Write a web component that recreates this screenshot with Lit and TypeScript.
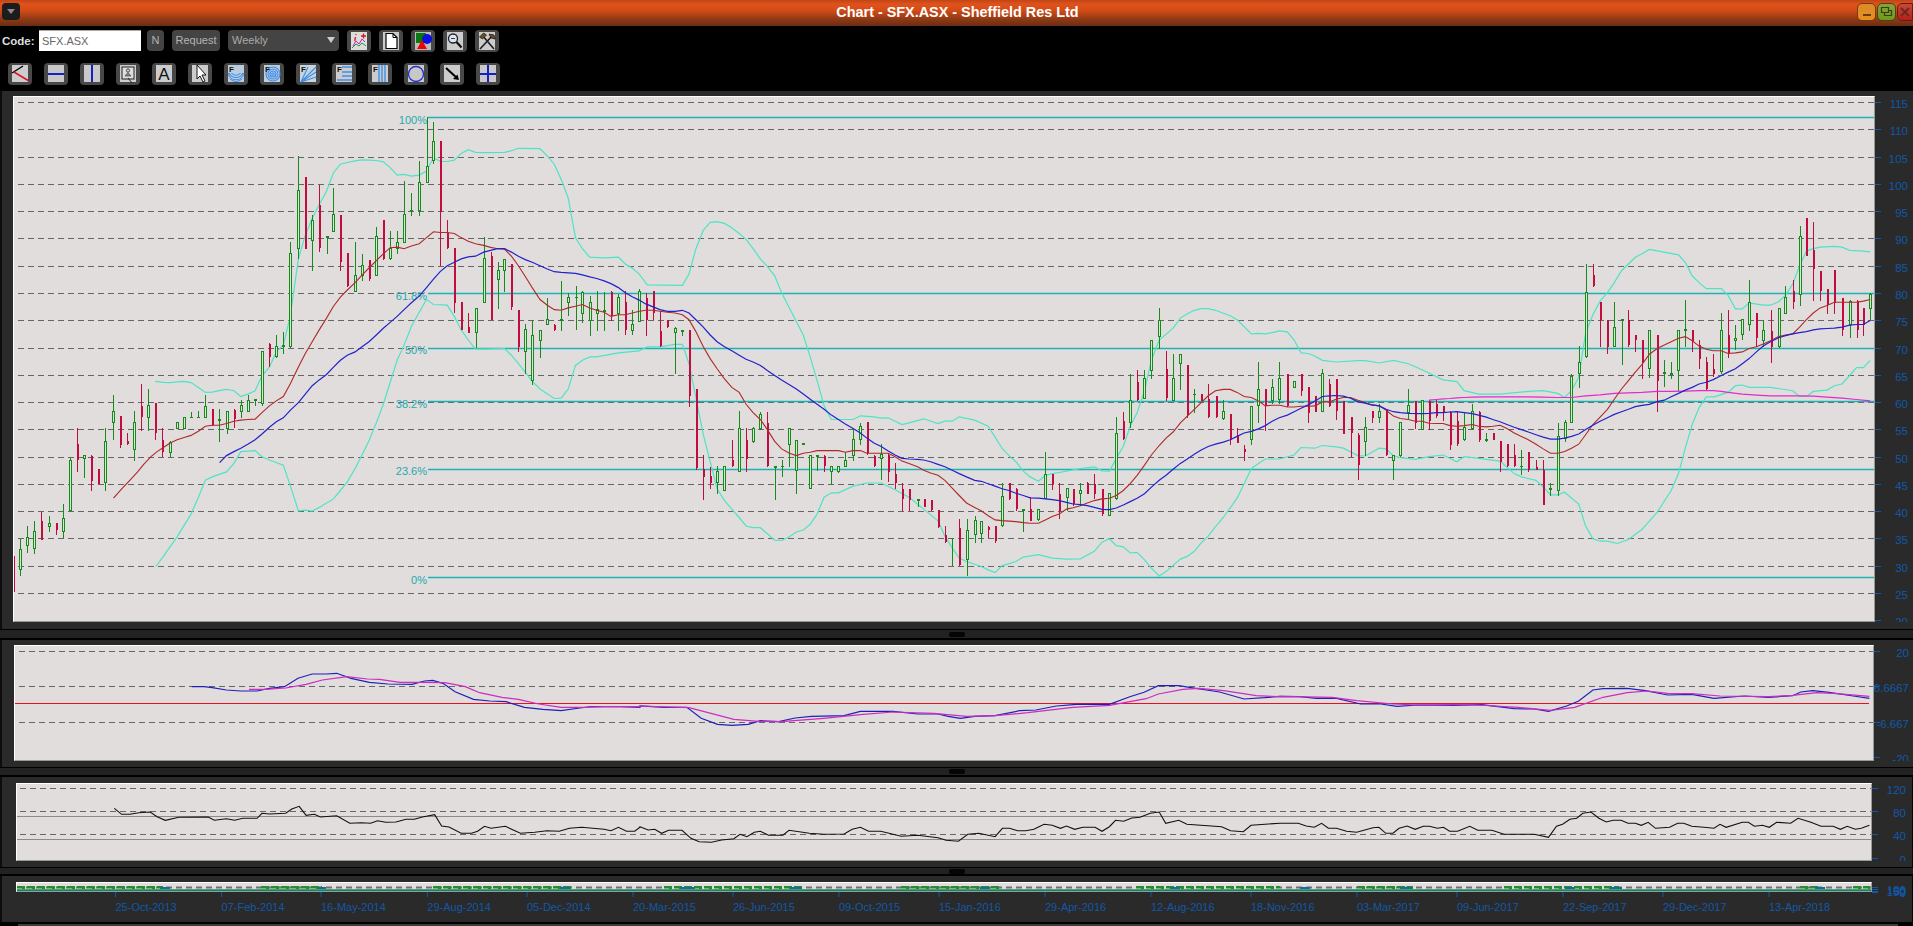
import { LitElement, html, css, svg } from "lit";
import { customElement } from "lit/decorators.js";

const SX3 = 2.45, SX5 = 2.477, SY = 2.958;
const xA = (z: number) => z / SX3;
const xB = (z: number) => 640 + z / SX3;
const xC = (z: number) => 1280 + z / SX5;
const yM = (z: number) => 100 + z / SY;
const yL = (z: number) => 620 + z / 3;

const C3 = `r32,1350,1455,1350,1455 g50,1298,1408,1328,1388 g67,1260,1340,1295,1318 g84,1245,1342,1276,1326 r101,1220,1300,1245,1300 g121,1230,1278,1253,1262 r138,1250,1287,1252,1272 g155,1195,1296,1238,1276 g172,1060,1215,1065,1213 r189,970,1100,1018,1065 g206,1050,1118,1052,1060 r223,1050,1157,1052,1128 r240,1092,1135,1092,1135 g258,970,1157,1010,1130 g278,872,1005,922,955 r295,935,1030,935,1020 r312,985,1020,1010,1018 g329,920,1068,955,1035 r346,840,978,905,938 g363,855,978,905,940 r380,897,1005,897,985 r397,970,1055,1005,1040 g417,1010,1055,1012,1042 g434,955,972,955,972 g451,938,972,940,972 g468,922,940,938,940 g486,920,940,938,940 g503,873,940,907,940 r520,915,965,915,960 g537,915,1012,945,947 g555,920,988,922,972 r573,915,970,918,945 g590,888,940,905,922 g607,872,922,888,922 g625,885,905,887,888 g642,745,905,745,898 r660,720,790,722,760 g677,695,762,730,760 g694,685,752,725,730 g711,420,732,455,730 g731,165,470,268,438 r748,228,440,228,440 g765,340,505,355,415 r782,250,450,310,438 g800,405,455,405,407 g817,260,390,340,390 r834,340,505,340,478 r851,452,552,452,550 g870,420,568,518,565 g887,455,535,488,518 r904,472,535,472,530 g922,375,520,405,520 r939,355,472,355,470 g956,388,472,438,470 g973,388,455,422,438 g990,238,422,340,422 g1008,275,342,326,328 g1027,180,342,245,328 g1045,50,245,196,245 g1062,65,190,122,180 r1079,120,490,120,330 r1096,355,440,392,438 r1113,438,630,438,600 r1130,598,680,598,680 r1147,630,688,672,688 g1165,615,732,617,688 g1185,405,600,470,600 r1202,450,652,460,652 g1219,480,618,505,532 g1236,470,568,472,505 r1253,485,622,485,612 r1270,622,745,622,730 g1287,662,810,680,745 g1304,652,842,695,830 g1323,680,762,682,712 g1341,585,665,650,665 r1358,662,682,665,680 g1375,535,682,650,652 g1392,570,640,585,600 g1410,550,680,583,585 g1427,565,660,568,632 g1445,580,698,600,652 g1462,565,682,620,632 g1480,568,682,622,624 r1497,565,655,568,638 g1515,575,682,583,632 r1532,565,695,598,680 g1549,622,695,665,682 g1566,560,655,565,655`;
const C4 = `r14,570,698,585,650 r32,565,652,565,630 r49,625,730,682,728 r67,650,675,650,672 g86,672,810,675,687 g104,682,698,682,684 r120,680,908,680,875 r137,855,1095,855,1090 r155,1050,1182,1090,1115 r172,1085,1150,1112,1132 g189,1082,1165,1098,1132 g207,1082,1157,1085,1155 r225,1005,1085,1065,1083 g243,920,1100,972,1098 r260,970,1100,1005,1062 g277,968,1015,972,1010 g295,922,975,930,973 r312,922,1085,955,1082 g330,1085,1182,1084,1086 g347,1065,1115,1083,1085 g366,970,1085,972,1018 g383,1005,1165,1007,1097 g400,1017,1019,1017,1019 g417,1050,1150,1052,1148 g434,1052,1098,1052,1054 r451,1050,1100,1052,1082 g469,1082,1140,1085,1100 g486,1082,1102,1085,1100 g503,1040,1085,1065,1085 g522,975,1068,1005,1052 g540,955,1020,965,1005 r556,952,1050,952,1045 r573,1050,1085,1052,1082 g591,1018,1125,1048,1060 r608,1048,1130,1050,1100 r625,1075,1150,1105,1132 r642,1132,1215,1150,1180 r659,1150,1215,1150,1182 g680,1180,1205,1181,1183 r695,1180,1205,1180,1205 r712,1182,1215,1182,1212 r730,1212,1265,1212,1262 r747,1260,1310,1288,1308 g765,1295,1378,1296,1298 r782,1240,1378,1265,1375 g800,1240,1408,1272,1360 g820,1230,1310,1245,1285 g836,1245,1310,1246,1282 r853,1260,1295,1262,1272 r870,1260,1310,1260,1305 g887,1132,1262,1172,1260 r904,1132,1182,1132,1180 r921,1148,1215,1150,1210 g939,1210,1278,1212,1214 r956,1175,1245,1210,1245 g976,1210,1245,1212,1240 g993,1040,1180,1108,1180 r1010,1105,1152,1105,1135 r1027,1132,1240,1165,1215 g1045,1148,1215,1150,1175 r1061,1150,1200,1150,1195 g1079,1132,1200,1155,1165 r1096,1130,1165,1132,1165 r1113,1105,1180,1135,1165 r1132,1150,1230,1150,1225 g1150,1165,1230,1165,1228 g1167,938,1182,985,1180 r1184,922,1005,950,1002 g1201,810,970,890,955 r1218,798,890,835,887 g1236,798,885,825,883 g1253,712,825,712,800 g1272,615,735,652,698 r1289,742,890,795,880 g1306,750,890,825,888 g1324,750,858,752,778 r1341,785,940,785,932 g1358,855,925,870,872 r1375,870,890,870,890 r1392,840,940,885,938 r1410,875,940,875,937 g1429,888,945,920,942 r1446,930,1020,930,1005 r1463,970,1015,995,1015 r1480,1020,1068,1033,1040 g1498,905,1020,907,1005 g1515,775,955,857,905 r1532,855,978,855,905 g1549,825,898,850,890 g1566,775,900,825,885`;
const C5 = `r18,810,908,810,905 g35,832,850,832,850 r52,810,875,810,860 r70,850,955,850,925 r87,875,922,875,922 g105,795,922,810,920 r122,825,908,840,905 r139,825,945,825,920 r157,890,988,890,988 r175,938,1055,938,985 r193,985,1125,990,1080 g211,938,1052,970,1010 r227,920,955,920,940 g246,898,955,920,940 r263,918,1052,918,1050 g281,1050,1125,1052,1065 g298,953,1055,955,1052 g318,855,942,905,925 r335,890,972,890,955 g352,888,975,890,973 r369,888,975,890,950 r387,885,940,900,935 r404,905,950,905,925 r421,920,1035,922,1020 r438,922,1022,950,1018 g456,925,1008,970,1005 g476,898,975,922,972 r492,920,1012,922,1005 g511,985,1012,1004,1006 r527,985,1005,985,1005 r545,1010,1100,1010,1070 r562,1018,1085,1018,1082 r580,1018,1085,1050,1082 g598,1035,1110,1083,1085 r615,1040,1100,1040,1095 r634,1065,1095,1085,1093 r652,1065,1198,1095,1198 g670,1133,1172,1150,1152 g688,955,1170,995,1155 g705,945,1012,955,1002 g722,810,955,818,953 g740,728,852,775,810 g757,485,762,568,760 r775,485,552,518,550 r793,598,730,598,650 r811,650,752,650,730 g828,598,730,672,730 g846,650,785,650,652 r863,620,730,650,725 r880,695,745,695,710 r897,710,825,710,775 g915,682,822,682,795 r934,695,922,695,830 g952,770,850,807,809 g969,775,825,809,811 g987,680,860,682,800 g1004,592,730,679,681 r1021,680,745,680,715 r1038,710,795,725,765 r1056,760,858,775,855 r1073,750,820,795,810 g1093,630,810,682,802 r1110,620,762,695,748 g1128,665,740,705,712 g1145,650,710,650,695 g1162,532,682,600,665 r1180,630,730,630,705 g1197,650,730,682,712 r1215,622,778,682,730 g1235,615,732,617,730 g1252,550,632,585,630 r1270,532,618,565,598 g1287,372,608,405,575 r1302,350,462,350,462 r1321,362,595,445,500 r1338,505,595,505,565 r1355,558,632,558,605 r1373,503,632,503,600 r1392,585,698,585,680 g1411,592,705,595,665 r1428,592,705,595,680 r1445,615,698,615,665 g1462,572,650,575,618`;

interface Candle { x: number; hi: number; lo: number; top: number; bot: number; up: boolean }
const parseC = (s: string, fx: (n: number) => number): Candle[] =>
  s.split(" ").map((t) => {
    const [x, hi, lo, top, bot] = t.slice(1).split(",").map(Number);
    return { x: Math.round(fx(x)) + 0.5, hi: yM(hi), lo: yM(lo), top: yM(top), bot: yM(bot), up: t[0] === "g" };
  });
const CANDLES = [...parseC(C3, xA), ...parseC(C4, xB), ...parseC(C5, xC)];

const seg = (s: string, fx: (n: number) => number, fy: (n: number) => number) =>
  s.trim().split(/\s+/).map((p) => {
    const [a, b] = p.split(",").map(Number);
    return `${fx(a).toFixed(1)},${fy(b).toFixed(1)}`;
  }).join(" ");

const RED_MA = [
  seg(`278,1178 300,1148 318,1125 337,1100 352,1078 370,1055 385,1040 400,1028 417,1015 434,1005 451,998 468,992 486,980 503,965 520,962 537,962 555,957 573,950 590,947 607,945 625,944 642,925 660,905 677,890 694,877 711,840 731,790 748,750 765,715 782,680 800,645 817,610 834,583 851,562 870,540 887,518 904,497 922,475 939,455 956,437 973,435 990,440 1008,432 1027,425 1045,407 1062,390 1079,392 1096,392 1113,395 1130,407 1147,418 1165,425 1185,430 1202,436 1219,440 1236,441 1253,462 1270,490 1287,522 1304,555 1323,590 1341,607 1358,620 1375,622 1392,615 1410,610 1427,605 1445,615 1462,622 1480,628 1497,640 1515,635 1532,635 1549,630 1566,625`, xA, yM),
  seg(`0,625 14,622 32,622 49,625 67,628 86,630 104,635 120,650 137,685 155,730 172,765 189,795 207,825 225,850 243,865 260,900 277,925 295,945 312,975 330,1010 347,1032 366,1045 383,1052 400,1045 417,1042 434,1037 451,1037 486,1037 503,1042 522,1037 540,1037 556,1045 573,1045 608,1045 625,1055 642,1068 659,1075 680,1085 695,1095 712,1103 730,1110 747,1125 765,1148 782,1170 800,1192 820,1205 836,1215 853,1230 870,1242 887,1244 921,1247 939,1250 956,1252 976,1252 993,1242 1010,1232 1027,1225 1045,1210 1061,1206 1079,1200 1096,1192 1113,1185 1132,1180 1150,1178 1167,1170 1184,1155 1201,1135 1218,1110 1236,1080 1253,1050 1272,1022 1289,1000 1306,982 1324,955 1341,935 1358,915 1375,895 1392,875 1410,860 1429,856 1446,856 1463,865 1480,877 1498,880 1515,890 1532,905 1549,903 1566,903`, xB, yM),
  seg(`0,903 18,908 35,908 52,906 70,906 87,905 105,893 122,893 139,885 157,880 175,880 193,888 211,895 227,902 246,905 263,918 281,935 298,942 318,945 335,950 352,950 369,956 387,957 404,957 421,963 438,965 456,963 476,960 492,965 511,967 527,965 545,962 562,972 580,985 598,995 615,1005 634,1018 652,1032 670,1045 688,1045 705,1040 722,1030 740,1018 757,990 775,960 793,938 811,915 828,885 846,855 863,830 880,805 897,782 915,752 934,735 952,725 969,715 987,705 1004,700 1021,712 1038,728 1056,737 1073,742 1093,742 1110,750 1128,748 1145,745 1162,735 1180,730 1197,722 1215,712 1235,700 1252,695 1270,692 1287,672 1304,650 1321,630 1338,615 1355,608 1373,598 1392,598 1411,598 1428,598 1445,595 1462,590`, xC, yM),
].join(" ");

const BLUE_MA = [
  seg(`538,1073 555,1052 573,1040 590,1030 607,1018 625,1005 642,988 660,968 677,952 694,940 711,918 731,895 748,870 765,845 782,828 800,812 817,790 834,770 851,755 870,745 887,730 904,715 922,695 939,675 956,658 973,640 990,620 1008,600 1027,580 1045,555 1062,530 1079,507 1096,490 1113,480 1130,470 1147,464 1165,462 1185,450 1202,445 1219,440 1236,440 1253,450 1270,462 1287,472 1304,480 1323,490 1341,500 1358,508 1375,510 1392,511 1410,513 1427,517 1445,523 1462,528 1480,535 1497,543 1515,555 1532,570 1549,582 1566,592`, xA, yM),
  seg(`14,603 32,612 49,620 67,625 86,625 104,622 120,630 137,650 155,672 172,695 189,715 207,730 225,742 243,755 260,767 277,775 295,785 312,800 330,815 347,828 366,842 383,855 400,870 417,885 434,900 451,915 469,932 486,945 503,958 522,972 540,985 556,1000 573,1015 591,1025 608,1038 625,1050 642,1060 659,1062 680,1063 695,1065 712,1070 730,1078 747,1085 765,1095 782,1105 800,1115 820,1125 836,1128 853,1135 870,1142 887,1150 904,1155 921,1163 939,1170 956,1177 976,1178 993,1180 1010,1182 1027,1185 1045,1190 1061,1195 1079,1197 1096,1200 1113,1205 1132,1211 1150,1212 1167,1207 1184,1198 1201,1188 1218,1178 1236,1165 1253,1145 1272,1125 1289,1110 1306,1092 1324,1075 1341,1062 1358,1048 1375,1035 1392,1025 1410,1018 1429,1012 1446,1005 1463,995 1480,985 1498,980 1515,973 1532,963 1549,950 1566,940`, xB, yM),
  seg(`18,932 35,922 52,912 70,902 87,890 105,877 122,875 139,874 157,876 175,882 193,893 211,897 227,902 246,905 263,915 281,922 298,925 318,927 352,928 369,927 387,925 404,925 421,923 438,922 456,925 476,928 492,932 511,938 527,945 545,952 562,960 580,968 598,975 615,982 634,990 652,997 670,1003 688,1003 705,1000 722,995 740,988 757,975 775,962 793,950 811,940 828,930 846,922 863,915 880,907 897,903 915,900 934,892 952,888 969,878 987,868 1004,858 1021,850 1038,840 1056,835 1073,827 1093,815 1110,805 1128,795 1145,780 1162,765 1180,745 1197,728 1215,715 1235,703 1252,697 1270,692 1287,688 1304,685 1321,680 1338,677 1355,676 1373,675 1392,672 1411,666 1428,664 1445,664 1462,652`, xC, yM),
].join(" ");

const MAGENTA_MA = seg(`369,888 387,886 404,884 421,883 438,881 456,880 476,879 511,878 545,878 580,878 615,878 652,879 688,880 722,880 757,875 793,872 828,868 863,866 897,865 934,862 969,862 1004,861 1038,860 1073,860 1093,862 1110,865 1145,870 1180,873 1215,875 1252,875 1287,875 1321,876 1355,879 1392,882 1428,886 1462,890`, xC, yM);

const BB_UP = [
  seg(`380,832 400,835 417,836 434,834 451,832 468,836 486,850 503,865 520,864 537,860 555,856 573,860 590,877 607,870 625,860 642,815 660,790 677,745 694,725 711,640 731,470 748,400 765,350 782,310 800,270 817,215 834,190 851,185 870,180 887,177 904,178 922,179 939,183 956,200 973,222 990,220 1008,225 1027,222 1045,210 1062,170 1079,182 1096,182 1113,178 1130,158 1147,147 1165,155 1185,156 1236,155 1253,150 1270,143 1323,144 1341,165 1358,190 1375,235 1392,290 1410,408 1427,440 1445,465 1480,467 1515,465 1532,485 1549,497 1566,515`, xA, yM),
  seg(`18,547 104,548 120,515 137,440 155,385 172,362 189,360 207,365 225,378 243,395 260,412 277,440 295,470 312,492 330,520 347,570 366,615 383,655 400,695 417,760 434,830 451,905 469,945 522,945 540,934 573,937 591,941 608,940 642,960 659,955 695,943 730,957 747,950 765,950 782,937 820,947 853,965 887,1030 904,1052 921,1070 939,1098 956,1115 976,1128 993,1110 1010,1105 1027,1102 1045,1098 1079,1090 1113,1085 1132,1097 1150,1098 1167,1060 1184,1025 1201,965 1218,925 1236,860 1253,770 1272,710 1306,675 1324,645 1341,632 1358,622 1375,617 1392,617 1410,622 1446,638 1463,650 1498,692 1515,690 1532,692 1549,688 1566,683`, xB, yM),
  seg(`18,686 35,710 52,748 70,750 87,758 105,770 139,775 193,771 211,771 246,778 281,770 318,780 352,798 404,828 438,833 456,860 492,870 545,870 615,862 652,860 688,868 705,880 722,860 740,820 757,690 775,635 793,595 811,570 828,540 846,505 863,485 880,465 897,455 915,442 987,458 1004,480 1021,520 1038,540 1056,558 1093,558 1110,578 1128,618 1145,618 1162,600 1197,607 1215,607 1235,597 1252,577 1270,545 1287,490 1304,447 1321,440 1338,435 1373,433 1392,435 1411,445 1445,447 1462,449`, xC, yM),
].join(" ");

const BB_LO = [
  seg(`382,1380 400,1350 434,1292 468,1225 486,1175 503,1125 520,1115 555,1100 573,1075 590,1040 625,1037 642,1055 660,1065 694,1080 711,1140 731,1215 748,1213 765,1216 782,1205 817,1180 834,1155 851,1130 870,1090 887,1050 904,1008 922,955 939,900 956,835 973,770 990,725 1008,670 1027,628 1045,590 1062,605 1096,607 1113,640 1130,680 1147,710 1165,737 1185,737 1236,735 1253,755 1270,780 1287,805 1304,832 1323,855 1358,883 1375,882 1392,855 1410,785 1427,770 1445,760 1462,760 1515,748 1566,742`, xA, yM),
  seg(`18,730 50,730 85,723 104,723 120,780 137,880 155,990 172,1070 189,1150 207,1185 225,1210 243,1235 260,1260 277,1265 295,1265 330,1302 347,1303 366,1292 383,1278 400,1272 417,1255 434,1225 451,1175 469,1162 486,1162 522,1142 556,1133 591,1133 625,1153 659,1175 695,1210 730,1245 747,1290 765,1325 782,1355 800,1365 836,1380 853,1390 870,1398 887,1378 921,1365 939,1352 976,1345 993,1350 1010,1355 1045,1358 1079,1357 1113,1335 1132,1308 1150,1298 1167,1318 1184,1322 1201,1340 1218,1338 1236,1360 1253,1385 1272,1408 1289,1395 1324,1358 1341,1350 1358,1335 1375,1310 1392,1290 1410,1262 1429,1235 1463,1178 1480,1135 1498,1090 1515,1075 1532,1062 1566,1062`, xB, yM),
  seg(`35,1050 52,1028 87,1030 105,1022 139,1026 157,1030 193,1052 211,1053 246,1030 263,1032 281,1053 298,1058 335,1063 369,1055 404,1050 438,1070 456,1055 492,1060 545,1068 580,1105 598,1115 634,1125 652,1145 670,1168 688,1168 705,1160 740,1195 757,1260 775,1298 793,1305 811,1305 835,1312 863,1300 897,1270 934,1220 969,1155 987,1105 1004,1030 1021,960 1038,910 1056,878 1075,878 1110,865 1128,845 1145,843 1162,850 1215,850 1270,860 1287,877 1304,877 1321,862 1355,858 1373,845 1392,840 1411,815 1428,792 1445,792 1462,770`, xC, yM),
].join(" ");

const MACD_BLUE = [
  seg(`470,200 500,200 520,203 555,210 590,213 630,213 660,205 697,200 730,175 765,162 800,162 825,160 860,175 905,187 950,192 1010,193 1040,183 1060,181 1085,190 1115,215 1160,238 1200,243 1240,245 1285,262 1330,268 1375,272 1420,264 1450,260 1520,260 1568,262`, xA, yL),
  seg(`0,258 60,262 115,262 150,295 190,313 225,316 265,313 295,302 340,305 380,294 420,289 500,287 540,274 620,274 680,282 730,282 755,289 785,295 820,289 870,287 930,272 970,270 1020,258 1070,253 1150,253 1200,230 1235,217 1270,197 1320,197 1350,203 1420,216 1480,237 1530,233 1568,229`, xB, yL),
  seg(`0,229 50,230 90,235 140,235 200,252 250,252 290,259 340,255 430,256 500,254 580,266 630,267 665,274 710,258 740,243 775,210 800,206 860,205 905,212 960,225 1020,223 1075,235 1150,228 1210,232 1270,227 1290,216 1320,212 1360,217 1420,228 1460,235`, xC, yL),
].join(" ");
const MACD_MAG = [
  seg(`610,208 650,208 700,204 750,193 790,180 850,170 900,177 930,178 980,187 1030,187 1090,188 1140,200 1175,218 1230,232 1270,238 1320,252 1375,262 1430,262 1480,260 1568,260`, xA, yL),
  seg(`0,258 120,263 230,298 290,304 345,305 450,295 540,284 620,276 720,280 800,289 870,287 950,278 1060,262 1150,256 1240,236 1270,222 1330,208 1370,205 1430,212 1510,227 1568,230`, xB, yL),
  seg(`0,229 130,232 190,242 280,252 340,255 430,254 490,255 590,262 670,271 730,262 800,232 860,218 910,213 960,220 1020,221 1090,228 1210,230 1270,226 1330,218 1380,221 1460,229`, xC, yL),
].join(" ");
const RSI_LINE = [
  seg(`280,565 298,583 318,583 340,578 368,576 385,590 405,601 438,592 510,591 525,601 555,596 575,601 595,595 630,595 642,580 660,582 700,580 715,567 733,559 750,586 770,583 785,591 825,587 857,610 885,608 908,610 925,602 945,607 970,606 995,598 1015,598 1035,591 1065,584 1082,618 1100,621 1130,640 1155,640 1170,634 1187,619 1203,625 1238,619 1275,640 1310,637 1340,632 1370,634 1395,625 1425,622 1480,628 1497,632 1515,622 1535,634 1555,634 1568,622`, xA, yL),
  seg(`0,620 20,630 36,628 53,640 70,631 103,631 125,655 145,665 175,667 200,660 230,656 245,643 262,650 280,637 295,634 315,646 350,646 365,631 415,640 450,643 500,642 520,628 540,622 560,634 590,634 640,649 680,646 730,653 750,661 780,664 803,643 830,640 870,650 888,625 905,625 925,632 945,632 965,628 990,613 1010,616 1030,625 1045,618 1065,628 1085,622 1115,622 1132,634 1150,620 1165,601 1185,604 1205,594 1225,592 1250,580 1272,576 1288,610 1320,601 1340,613 1425,620 1447,632 1478,635 1497,616 1540,612 1568,610`, xB, yL),
  seg(`0,610 45,610 65,618 85,622 103,610 120,625 140,625 165,634 190,637 230,623 245,622 262,640 280,640 295,625 315,618 335,628 355,619 370,619 390,625 405,622 420,634 440,634 470,619 490,631 525,631 555,643 630,643 665,652 685,619 700,613 718,598 735,595 750,580 770,576 790,595 808,606 825,601 845,601 862,610 880,610 895,616 912,607 930,625 965,622 985,610 1000,610 1020,619 1050,622 1075,625 1090,613 1105,622 1145,607 1160,607 1175,619 1195,616 1212,622 1230,607 1265,610 1283,595 1315,607 1340,619 1370,619 1388,628 1405,619 1425,628 1440,625 1460,616`, xC, yL),
].join(" ");

const GRID_PRICES = [115, 110, 105, 100, 95, 90, 85, 80, 75, 70, 65, 60, 55, 50, 45, 40, 35, 30, 25];
const yP = (p: number) => 129.4 + (110 - p) * 5.454;
const FIBS = [
  { y: 117.2, l: "100%", ty: 124 },
  { y: 293, l: "61.8%", ty: 300 },
  { y: 347.5, l: "50%", ty: 354 },
  { y: 401, l: "38.2%", ty: 408 },
  { y: 468.8, l: "23.6%", ty: 475 },
  { y: 577.3, l: "0%", ty: 584 },
];
const DATES: [number, string][] = [
  [115.5, "25-Oct-2013"], [221.6, "07-Feb-2014"], [321, "16-May-2014"], [427.3, "29-Aug-2014"], [527, "05-Dec-2014"], [633, "20-Mar-2015"],
  [733, "26-Jun-2015"], [839, "09-Oct-2015"], [939, "15-Jan-2016"], [1045, "29-Apr-2016"], [1151, "12-Aug-2016"], [1251, "18-Nov-2016"],
  [1357, "03-Mar-2017"], [1457, "09-Jun-2017"], [1563, "22-Sep-2017"], [1663, "29-Dec-2017"], [1769, "13-Apr-2018"],
];
const GREEN_RUNS: [number, number][] = [[17, 163], [261, 322], [433, 571], [664, 803], [901, 999], [1136, 1280], [1357, 1413], [1504, 1619], [1800, 1820], [1853, 1870]];
const BLUE_RUNS: [number, number][] = [[160, 170], [318, 326], [560, 570], [680, 695], [790, 802], [980, 990], [1170, 1180], [1300, 1310], [1400, 1412], [1565, 1575], [1610, 1622], [1815, 1825]];

const ICON_TOP = [
  svg`<rect x="4" y="2" width="16" height="18" fill="#ddd"/><path d="M6 16l3-5 3 3 3-5 3 3" fill="none" stroke="#d020c0" stroke-width="1"/><path d="M5 18l4-4 3 2 3-3 4 3" fill="none" stroke="#1a9a40" stroke-width="1"/><path d="M9 4v1M8.5 7l-.8 4M14 6h5M16.5 3.5v5" stroke="#d01818" stroke-width="1.3" fill="none"/>`,
  svg`<rect x="4" y="2" width="16" height="18" fill="#ccc"/><path d="M7 3.5h7l4 4v11H7z" fill="#fff" stroke="#000" stroke-width="1.2"/><path d="M14 3.5v4h4" fill="none" stroke="#000"/>`,
  svg`<rect x="4" y="2" width="16" height="18" fill="#bbb"/><rect x="5" y="3" width="10" height="10" fill="#0a7a0a"/><circle cx="16" cy="9" r="5" fill="#0a10e0"/><path d="M6 19l5-9 5 9z" fill="#f00000"/>`,
  svg`<rect x="4" y="2" width="16" height="18" fill="#ccc"/><circle cx="10" cy="8.5" r="4.5" fill="#dfe6ee" stroke="#222" stroke-width="1.3"/><path d="M8 8.5h4" stroke="#2a3a8a" stroke-width="1.2"/><path d="M13.5 12l5 5.5" stroke="#111" stroke-width="2.2"/>`,
  svg`<rect x="4" y="2" width="16" height="18" fill="#ccc"/><path d="M5 19L18 5M7 5l12 14" stroke="#222" stroke-width="1.7"/><path d="M4.5 7l4-4 3 2-4 4zM14 4l5 1 1 4-4-1z" fill="#6a5020" stroke="#111" stroke-width=".7"/>`,
];
const F = svg`<text x="5" y="9" class="ftxt">F</text>`;
const BL = "#3f8fe8";
const ICON_ROW = [
  svg`<rect x="4" y="2" width="16" height="17" fill="#ccc"/><path d="M4 10L15 3" stroke="#000" stroke-width="1.3"/><path d="M6 9l15 9" stroke="#e01020" stroke-width="1.5"/>`,
  svg`<rect x="4" y="2" width="16" height="17" fill="#c8c8c8"/><path d="M4 11h16" stroke="#1420c0" stroke-width="2"/>`,
  svg`<rect x="4" y="2" width="16" height="17" fill="#c8c8c8"/><path d="M12 2v17" stroke="#1420c0" stroke-width="2"/>`,
  svg`<rect x="4" y="2" width="16" height="17" fill="#ccc"/><rect x="6" y="4" width="12" height="12" fill="#ddd" stroke="#222"/><circle cx="12" cy="7.5" r="1.6" fill="none" stroke="#444"/><path d="M9 13l3-3.5 3 3.5z" fill="#888" stroke="#333" stroke-width=".6"/><path d="M12 15l4 5" stroke="#222"/>`,
  svg`<rect x="4" y="2" width="16" height="17" fill="#ccc"/><text x="12" y="17" text-anchor="middle" class="atxt">A</text>`,
  svg`<rect x="4" y="2" width="16" height="17" fill="#ccc"/><path d="M9 2v14l3-3 3 6 2-1-3-6h4z" fill="#fff" stroke="#000" stroke-width=".9"/>`,
  svg`<rect x="4" y="2" width="16" height="17" fill="#bcd"/>${F}<path d="M4 10c2 9 14 9 16 0M5 10c3 6 11 6 14 0M7.5 10c2 3 7 3 9 0" fill="none" stroke="${BL}" stroke-width="1.1"/><path d="M6 16q6 5 12 0" fill="none" stroke="${BL}"/>`,
  svg`<rect x="4" y="2" width="16" height="17" fill="#bcd"/><g fill="none" stroke="${BL}" stroke-width="1.1"><circle cx="13" cy="11" r="7"/><circle cx="13" cy="11" r="5"/><circle cx="13" cy="11" r="3"/><circle cx="13" cy="11" r="1.3"/></g><text x="5" y="9" class="ftxt">F</text>`,
  svg`<rect x="4" y="2" width="16" height="17" fill="#c8d4dc"/>${F}<path d="M5 19L20 4M5 19L20 9M5 19L20 14M5 19L12 4" fill="none" stroke="${BL}" stroke-width="1.1"/>`,
  svg`<rect x="4" y="2" width="16" height="17" fill="#ccc"/>${F}<path d="M10 4h10M10 9h10M10 13h10M5 17h15" stroke="${BL}" stroke-width="1.4"/>`,
  svg`<rect x="4" y="2" width="16" height="17" fill="#ccc"/>${F}<path d="M11 2v17M14 2v17M17 2v17" stroke="${BL}" stroke-width="1.4"/><path d="M12.5 2v17" stroke="#bcd"/>`,
  svg`<rect x="4" y="2" width="16" height="17" fill="#c8c8c8"/><circle cx="12" cy="11" r="7.5" fill="none" stroke="#2430c8" stroke-width="1.3"/>`,
  svg`<rect x="4" y="2" width="16" height="17" fill="#ccc"/><path d="M6 5l11 10" stroke="#000" stroke-width="2"/><path d="M19 17l-6-1 4.5-4.5z" fill="#000"/>`,
  svg`<rect x="4" y="2" width="16" height="17" fill="#c8c8c8"/><path d="M4 11h16M12 2v17" stroke="#1420c0" stroke-width="2"/>`,
];

const AXIS_BLUE = "#1158a8";

@customElement("app-root")
export class AppRoot extends LitElement {
  static styles = css`
    :host { display: block; width: 1913px; height: 926px; background: #000; overflow: hidden; font-family: "Liberation Sans", Arial, sans-serif; }
    .title { height: 26px; display: grid; grid-template-columns: 60px 1fr 60px; align-items: start;
      background: linear-gradient(#c04616 0, #e0521a 4px, #d54c18 10px, #8a3814 20px, #6a2c14 26px); }
    .title .txt { text-align: center; color: #fff; font-weight: bold; font-size: 14.4px; line-height: 25px; padding-left: 2px; }
    .menu { width: 18px; height: 17px; margin: 3px 0 0 2px; background: #1c1c1c; border-radius: 4px; display: flex; align-items: center; justify-content: center; }
    .menu i { width: 0; height: 0; border-left: 4px solid transparent; border-right: 4px solid transparent; border-top: 5px solid #8a8a8a; }
    .wins { display: flex; gap: 1px; justify-content: flex-end; padding-top: 3px; }
    .win { width: 19px; height: 18px; border-radius: 5px; box-sizing: border-box; display: flex; align-items: center; justify-content: center; }
    .win.o { background: linear-gradient(#d98a2a, #e8901c); border: 1px solid #7a3a10; }
    .win.g { background: linear-gradient(#8aa040, #6f9a1c); border: 1px solid #3c4a10; }
    .win.r { background: linear-gradient(#c44a3a, #b52018); border: 1px solid #6a1810; width: 16px; border-radius: 5px 0 0 5px; }
    .toolbar { height: 65px; box-sizing: border-box; padding-top: 4px; background: #000; display: flex; flex-direction: column; gap: 12px; }
    .row { display: flex; align-items: center; gap: 8px; height: 21px; }
    .row.r1 { padding-left: 2px; }
    .row.r2 { padding-left: 8px; gap: 12px; height: 22px; }
    .code { display: flex; gap: 6px; align-items: center; }
    .lbl { width: 31px; color: #ddd; font-size: 11.5px; font-weight: bold; }
    .inp { width: 102px; height: 21px; box-sizing: border-box; background: #fff; border-top: 1px solid #aaa; color: #666; font-size: 11px; line-height: 20px; padding-left: 3px; }
    .btn { height: 21px; box-sizing: border-box; background: #444; border-radius: 4px; color: #b4b4b4; font-size: 11px; line-height: 21px; text-align: center; }
    .btn.n { width: 17px; }
    .btn.req { width: 48px; }
    .btn.sel { width: 111px; text-align: left; padding-left: 4px; position: relative; color: #aaa; }
    .btn.sel i { position: absolute; right: 4px; top: 7px; width: 0; height: 0; border-left: 4px solid transparent; border-right: 4px solid transparent; border-top: 6px solid #ccc; }
    .ico { width: 24px; height: 22px; display: block; background: #484848; border-radius: 4px; }
    .ftxt { font: bold 8px "Liberation Sans", sans-serif; fill: #111; }
    .atxt { font: 17px "Liberation Sans", sans-serif; fill: #111; }
    .pane { background: #2a2a2a; box-sizing: border-box; border-left: 2px solid #0c0c0c; display: flex; align-items: flex-start; }
    .p1 { height: 538px; padding: 5px 0 0 11px; }
    .p2 { height: 127px; padding: 5px 0 0 12px; }
    .p3 { height: 90px; padding: 6px 0 0 14px; border-right: 1px solid #000; }
    .p4 { height: 46px; padding: 6px 0 0 14px; border-right: 1px solid #000; position: relative; }
    .plot { display: block; flex: none; background: #e0dddc; box-sizing: border-box; border: 1px solid #999; border-top-color: #fff; border-left-color: #fff; }
    .axis { display: block; flex: none; }
    .sep { box-sizing: border-box; border-top: 1px solid #000; border-bottom: 2px solid #000; background: #222; display: flex; align-items: center; justify-content: center; }
    .sep i { width: 16px; height: 5px; border-radius: 2px; background: #050505; }
    .s1 { height: 11px; } .s2 { height: 10px; } .s3 { height: 9px; }
    .foot { height: 4px; background: #000; padding: 2px 15px 0 18px; box-sizing: border-box; }
    .foot i { display: block; height: 2px; background: #3c3c3c; }
    .dates { position: absolute; left: 0; top: 16px; }
    text.ax { font: 11.5px "Liberation Sans", sans-serif; fill: #1158a8; }
    text.dt { font: 11px "Liberation Sans", sans-serif; fill: #1158a8; }
    text.pc { font: 11px "Liberation Sans", sans-serif; fill: #1ea9b0; }
  `;

  private dash(x1: number, x2: number, y: number) {
    return svg`<line x1=${x1} x2=${x2} y1=${y} y2=${y} stroke="#666" stroke-dasharray="6 4"/>`;
  }

  private mainPlot() {
    return svg`<svg class="plot" width="1862" height="526" viewBox="14 97 1860 524">
      ${GRID_PRICES.map((p) => this.dash(18, 1875, Math.round(yP(p)) + 0.5))}
      ${FIBS.map((f) => svg`
        <line x1="428" x2="1875" y1=${Math.round(f.y) + 0.5} y2=${Math.round(f.y) + 0.5} stroke="#1fb2b4" stroke-width="1.5"/>
        <text class="pc" x="427" y=${f.ty} text-anchor="end">${f.l}</text>`)}
      <polyline points=${BB_UP} fill="none" stroke="#4fe3c6" stroke-width="1.2"/>
      <polyline points=${BB_LO} fill="none" stroke="#4fe3c6" stroke-width="1.2"/>
      ${CANDLES.map((c) => c.up
        ? svg`<path d="M${c.x} ${c.hi.toFixed(1)}V${c.top.toFixed(1)}M${c.x} ${c.bot.toFixed(1)}V${c.lo.toFixed(1)}" stroke="#178a1c" shape-rendering="crispEdges"/>
              <rect x=${c.x - 1} y=${c.top.toFixed(1)} width="2" height=${Math.max(c.bot - c.top, 0.6).toFixed(1)} fill="#dbe6d9" stroke="#178a1c" shape-rendering="crispEdges"/>`
        : svg`<path d="M${c.x} ${c.hi.toFixed(1)}V${c.lo.toFixed(1)}" stroke="#c20c3e" shape-rendering="crispEdges"/>
              <rect x=${c.x - 0.5} y=${c.top.toFixed(1)} width="2" height=${(c.bot - c.top).toFixed(1)} fill="#c20c3e" shape-rendering="crispEdges"/>`)}
      <polyline points=${MAGENTA_MA} fill="none" stroke="#e02cc8" stroke-width="1.2"/>
      <polyline points=${RED_MA} fill="none" stroke="#ae2a2a" stroke-width="1.1"/>
      <polyline points=${BLUE_MA} fill="none" stroke="#2222c8" stroke-width="1.2"/>
    </svg>`;
  }

  private macdPlot() {
    return svg`<svg class="plot" width="1860" height="116" viewBox="15 646 1858 114">
      ${[651.5, 686.5, 722.5].map((y) => this.dash(19, 1874, y))}
      <line x1="14" x2="1869" y1="703.5" y2="703.5" stroke="#e81020" stroke-width="1.2"/>
      <polyline points=${MACD_BLUE} fill="none" stroke="#2020b8" stroke-width="1.2"/>
      <polyline points=${MACD_MAG} fill="none" stroke="#cc2cc0" stroke-width="1.2"/>
    </svg>`;
  }

  private rsiPlot() {
    return svg`<svg class="plot" width="1856" height="78" viewBox="17 784 1854 76">
      ${[788.5, 811.5, 834.5].map((y) => this.dash(20, 1872, y))}
      ${[816.5, 839.5].map((y) => svg`<line x1="16" x2="1872" y1=${y} y2=${y} stroke="#8a8a8a" stroke-width="1.1"/>`)}
      <polyline points=${RSI_LINE} fill="none" stroke="#111" stroke-width="1.1"/>
    </svg>`;
  }

  private volPlot() {
    return svg`<svg class="plot" width="1856" height="10" viewBox="17 883 1854 8">
      <line x1="16" x2="1872" y1="887.5" y2="887.5" stroke="#7a6a7a" stroke-width="2" stroke-dasharray="6 4"/>
      ${GREEN_RUNS.map(([a, b]) => svg`<line x1=${a} x2=${b} y1="887.5" y2="887.5" stroke="#2c8a2c" stroke-width="3" stroke-dasharray="8 2"/>
        <line x1=${a} x2=${b} y1="889" y2="889" stroke="#c8f0c8" stroke-dasharray="5 5"/>`)}
      ${BLUE_RUNS.map(([a, b]) => svg`<line x1=${a} x2=${b} y1="888" y2="888" stroke="#1a6a9a" stroke-width="2"/>`)}
      <line x1="16" x2="1872" y1="890.2" y2="890.2" stroke="#0e8a62" stroke-width="2"/>
    </svg>`;
  }

  private axis(x: number, y: number, w: number, h: number, ticks: [number, number, string][], right: number) {
    return svg`<svg class="axis" width=${w} height=${h} viewBox="${x} ${y} ${w} ${h}">
      ${ticks.map(([ty, by, l]) => svg`<line x1=${x} x2=${x + 6} y1=${ty} y2=${ty} stroke=${AXIS_BLUE}/>
        <text class="ax" x=${right} y=${by} text-anchor="end">${l}</text>`)}
    </svg>`;
  }

  render() {
    const mainTicks = [...GRID_PRICES, 20].map((p) => [Math.round(yP(p)) + 0.5, Math.round(yP(p)) + 6, String(p)] as [number, number, string]);
    return html`
      <div class="title">
        <div class="menu"><i></i></div>
        <div class="txt">Chart - SFX.ASX - Sheffield Res Ltd</div>
        <div class="wins">
          <div class="win o"><svg width="12" height="10" viewBox="0 0 12 10"><rect x="2" y="7" width="8" height="2" fill="#6a3a10"/></svg></div>
          <div class="win g"><svg width="13" height="12" viewBox="0 0 13 12"><path d="M1.5 1.5h7v5h-7zM4.5 6.5v3h7v-5h-3" fill="none" stroke="#33420c" stroke-width="1.2"/></svg></div>
          <div class="win r"><svg width="12" height="12" viewBox="0 0 12 12"><path d="M2 2l8 8M10 2l-8 8" stroke="#6a2a20" stroke-width="2"/></svg></div>
        </div>
      </div>
      <div class="toolbar">
        <div class="row r1">
          <div class="code">
            <span class="lbl">Code:</span>
            <div class="inp">SFX.ASX</div>
            <div class="btn n">N</div>
          </div>
          <div class="btn req">Request</div>
          <div class="btn sel">Weekly<i></i></div>
          ${ICON_TOP.map((i) => html`<svg class="ico" viewBox="0 0 24 22">${i}</svg>`)}
        </div>
        <div class="row r2">
          ${ICON_ROW.map((i) => html`<svg class="ico" viewBox="0 0 24 22">${i}</svg>`)}
        </div>
      </div>
      <div class="pane p1">
        ${this.mainPlot()}
        ${this.axis(1875, 96, 36, 526, mainTicks, 1908)}
      </div>
      <div class="sep s1"><i></i></div>
      <div class="pane p2">
        ${this.macdPlot()}
        ${this.axis(1874, 645, 37, 116, [[651.5, 657, "20"], [686.5, 692, "6.6667"], [722.5, 728, "-6.667"], [757.5, 763, "-20"]], 1909)}
      </div>
      <div class="sep s2"><i></i></div>
      <div class="pane p3">
        ${this.rsiPlot()}
        ${this.axis(1872, 783, 38, 78, [[788.5, 794, "120"], [811.5, 817, "80"], [834.5, 840, "40"], [858.5, 864, "0"]], 1906)}
      </div>
      <div class="sep s3"><i></i></div>
      <div class="pane p4">
        ${this.volPlot()}
        ${this.axis(1872, 882, 38, 18, [[887.5, 894, "100"], [889.5, 895, "50"], [891.5, 896, "150"], [892.5, 897, "0"]], 1906)}
        <svg class="dates" width="1908" height="30" viewBox="2 892 1908 30">
          ${DATES.map(([x, l]) => svg`<line x1=${x} x2=${x} y1="892" y2="897" stroke=${AXIS_BLUE}/><text class="dt" x=${x} y="911">${l}</text>`)}
        </svg>
      </div>
      <div class="foot"><i></i></div>
    `;
  }
}
